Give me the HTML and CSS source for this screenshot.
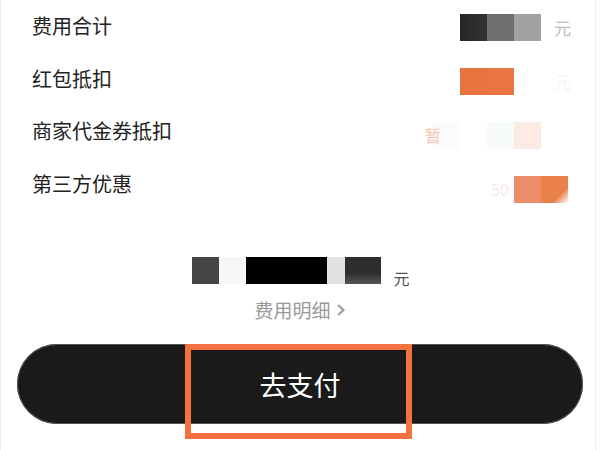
FILE: index.html
```html
<!DOCTYPE html>
<html lang="zh">
<head>
<meta charset="utf-8">
<link rel="stylesheet" href="styles.css">
</head>
<body>
<div class="page">
  <div class="rows">
    <div class="row">
      <span class="label">费用合计</span>
      <div class="strip s1">
        <span class="c c2 dk1"></span>
        <span class="c c3 dk2"></span>
        <span class="c c4 dk3"></span>
        <span class="unit c56">元</span>
      </div>
    </div>
    <div class="row">
      <span class="label">红包抵扣</span>
      <div class="strip s2">
        <span class="c c2 or1"></span>
        <span class="c c3 or2"></span>
        <span class="unit c56 ghost">元</span>
      </div>
    </div>
    <div class="row">
      <span class="label">商家代金券抵扣</span>
      <div class="strip s3">
        <span class="c c1 wh1"><span class="zan">暂</span></span>
        <span class="c c3 wh2"></span>
        <span class="c c4 pe1"></span>
      </div>
    </div>
    <div class="row">
      <span class="label">第三方优惠</span>
      <div class="strip s4">
        <span class="c c3 fifty">50</span>
        <span class="c c4 sa1"></span>
        <span class="c c5 sa2"></span>
      </div>
    </div>
  </div>

  <div class="total">
    <div class="amount">
      <span class="b w27 g1"></span>
      <span class="b w27 g2"></span>
      <span class="b w81 g3"></span>
      <span class="b w18 g4"></span>
      <span class="b w36 g5"></span>
    </div>
    <span class="yuan">元</span>
  </div>

  <div class="detail">
    <span>费用明细</span>
    <svg class="chev" width="10" height="14" viewBox="0 0 10 14"><path d="M2 2 L7.5 7 L2 12" fill="none" stroke="#999" stroke-width="2"/></svg>
  </div>

  <div class="btn-wrap">
    <div class="pay-btn">去支付</div>
    <div class="highlight"></div>
  </div>
</div>
</body>
</html>
```

FILE: styles.css
```css
html, body {
  margin: 0;
  padding: 0;
  background: #fff;
}
body {
  font-family: "Noto Sans CJK SC", "Noto Sans", sans-serif;
}
.page {
  width: 594px;
  height: 450px;
  border-left: 1px solid #ececec;
  border-right: 1px solid #ececec;
  overflow: hidden;
}
.rows {
  display: flex;
  flex-direction: column;
}
.row {
  height: 52.5px;
  display: flex;
  align-items: center;
}
.label {
  padding-left: 31px;
  font-size: 20px;
  color: #222;
  line-height: 24px;
}
.strip {
  margin-left: auto;
  margin-right: 0;
  display: grid;
  grid-template-columns: repeat(6, 27px);
  grid-template-rows: 27px;
  align-self: flex-start;
  width: 162px;
}
.s1 { margin-top: 14px; }
.s2 { margin-top: 15.5px; }
.s3 { margin-top: 17px; }
.s4 { margin-top: 18.5px; }
.c { display: block; grid-row: 1; position: relative; }
.c1 { grid-column: 1; }
.c2 { grid-column: 2; }
.c3 { grid-column: 3; }
.c4 { grid-column: 4; }
.c5 { grid-column: 5; }
.c56 { grid-column: 5 / 7; grid-row: 1; }
.dk1 { background: linear-gradient(90deg, #262626, #333); }
.dk2 { background: #707070; }
.dk3 { background: #a2a2a2; }
.or1 { background: #e9733f; }
.or2 { background: #e97642; }
.wh1 { background: #fbfbfb; }
.wh2 { background: #f8fcf8; }
.pe1 { background: #fcebe3; }
.sa1 { background: #ec8c68; }
.sa2 { background: linear-gradient(135deg, #e9804a 70%, #fff 100%); }
.unit {
  font-size: 17px;
  line-height: 27px;
  color: #bdbdbd;
  padding-left: 13px;
}
.unit.ghost { color: #f5f5f5; }
.zan {
  position: absolute;
  left: -8px;
  top: 3px;
  font-size: 16px;
  line-height: 20px;
  color: #f6c3ae;
}
.fifty {
  font-size: 16px;
  line-height: 27px;
  color: #f5ebe8;
  padding-left: 4px;
}

.total {
  margin-top: 47px;
  display: flex;
  justify-content: center;
  align-items: flex-end;
  padding-left: 6px;
}
.amount {
  display: flex;
  height: 27px;
}
.b { display: block; height: 27px; }
.w27 { width: 27px; }
.w81 { width: 81px; }
.w18 { width: 18px; }
.w36 { width: 36px; }
.g1 { background: #444; }
.g2 { background: #f6f6f6; }
.g3 { background: #000; }
.g4 { background: #e2e2e2; }
.g5 { background: linear-gradient(180deg, #2e2e2e 60%, #555 100%); }
.yuan {
  margin-left: 12px;
  font-size: 16px;
  line-height: 18px;
  color: #555;
  margin-bottom: -3px;
}

.detail {
  margin-top: 15px;
  display: flex;
  justify-content: center;
  align-items: center;
  gap: 5px;
  font-size: 19px;
  line-height: 22px;
  color: #999;
  padding-left: 4px;
}
.chev { display: block; }

.btn-wrap {
  position: relative;
  margin: 23px 0 0 16px;
  width: 566px;
}
.pay-btn {
  height: 80px;
  border-radius: 40px;
  background: #1a1a1a;
  color: #fff;
  font-size: 27px;
  display: flex;
  align-items: center;
  justify-content: center;
  box-shadow: 0 0 0 1px #555 inset;
}
.highlight {
  position: absolute;
  left: 168px;
  top: 0;
  width: 215px;
  height: 83px;
  border: 6px solid #f4723f;
}
```
